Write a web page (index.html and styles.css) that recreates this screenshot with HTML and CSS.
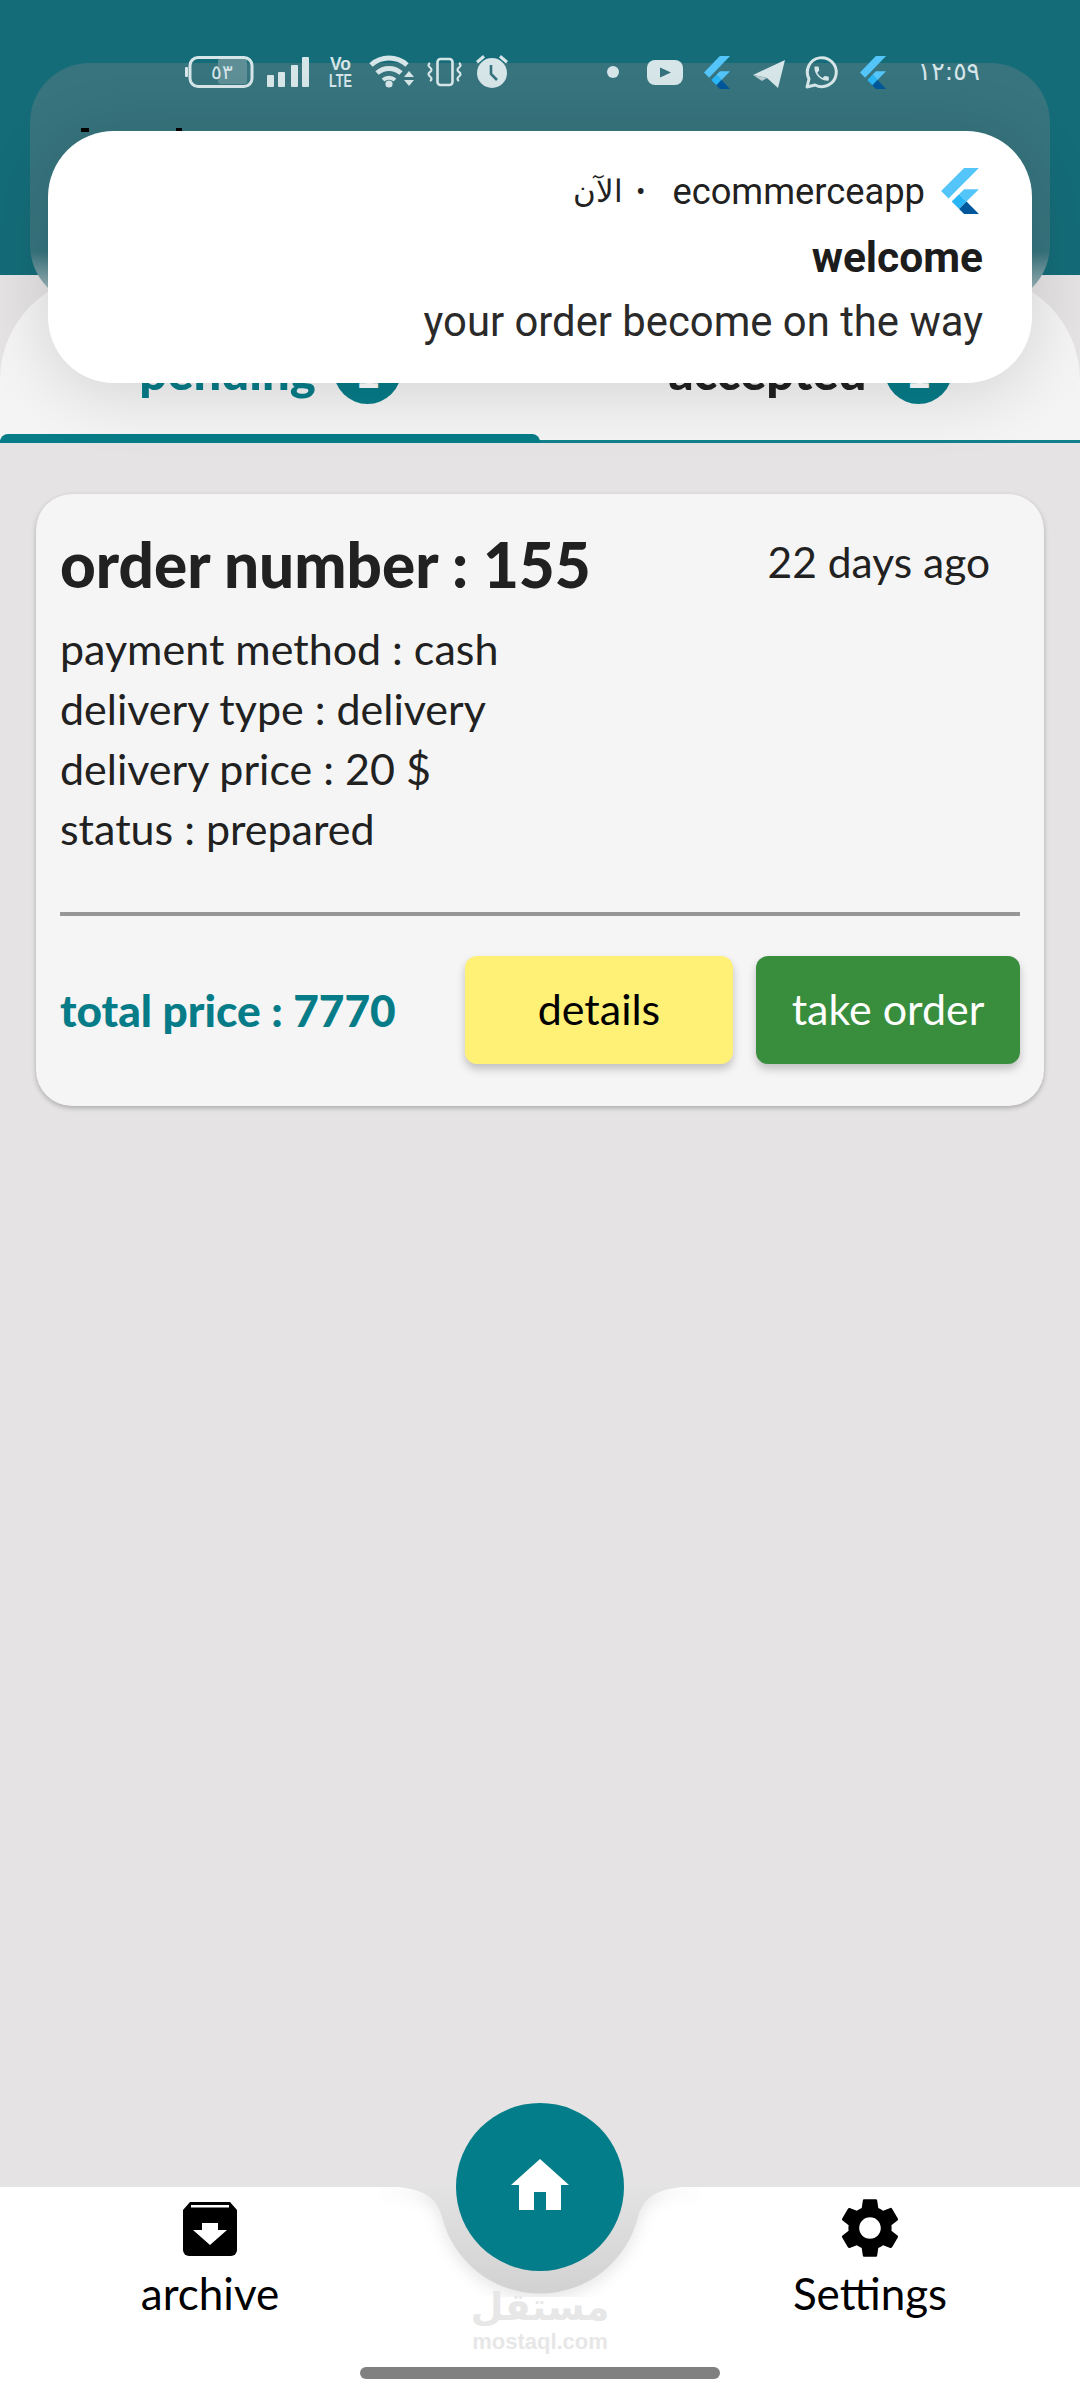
FILE: index.html
```html
<!DOCTYPE html>
<html lang="en">
<head>
<meta charset="utf-8">
<title>Orders</title>
<link rel="stylesheet" href="styles.css">
</head>
<body>
<div class="app">
  <header class="appbar"></header>

  <section class="tabs">
    <div class="tab-row">
      <div class="tab tab-active"><span class="tab-label">pending</span><span class="badge">1</span></div>
      <div class="tab"><span class="tab-label">accepted</span><span class="badge">1</span></div>
    </div>
    <div class="tab-line"><div class="tab-indicator"></div></div>
  </section>

  <main class="content">
    <article class="card">
      <div class="card-head">
        <h2 class="order-title">order number : 155</h2>
        <span class="order-age">22 days ago</span>
      </div>
      <ul class="order-meta">
        <li>payment method : cash</li>
        <li>delivery type : delivery</li>
        <li>delivery price : 20 $</li>
        <li>status : prepared</li>
      </ul>
      <hr class="divider">
      <div class="card-foot">
        <span class="total">total price : 7770</span>
        <div class="actions">
          <button class="btn btn-details">details</button>
          <button class="btn btn-take">take order</button>
        </div>
      </div>
    </article>
  </main>

  <nav class="nav">
    <svg class="notch" viewBox="0 0 320 110" width="320" height="110">
      <defs><linearGradient id="notchfill" x1="0" y1="0" x2="0" y2="1"><stop offset="0" stop-color="#e4e3e4"/><stop offset="1" stop-color="#d2d2d2"/></linearGradient></defs>
      <path class="notch-shape" fill="url(#notchfill)" d="M0 0H12C32 0 56 5 62 30A101 101 0 0 0 258 30C264 5 288 0 308 0H320V-2H0Z"/>
    </svg>
    <a class="nav-item">
      <svg class="nav-icon" viewBox="0 0 54 54" width="54" height="54">
        <path d="M7 0H47L54 8V48A6 6 0 0 1 48 54H6A6 6 0 0 1 0 48V8Z" fill="#000"/>
        <rect x="8" y="3" width="38" height="2.5" fill="#fff"/>
        <path d="M19 21H35V28H44L27 43L10 28H19Z" fill="#fff"/>
      </svg>
      <span class="nav-label">archive</span>
    </a>
    <a class="nav-item">
      <svg class="nav-icon nav-icon-gear" viewBox="0 0 24 24" width="72" height="72">
        <path d="M19.14 12.94c.04-.3.06-.61.06-.94 0-.32-.02-.64-.07-.94l2.03-1.58a.49.49 0 0 0 .12-.61l-1.92-3.32a.488.488 0 0 0-.59-.22l-2.39.96c-.5-.38-1.03-.7-1.62-.94l-.36-2.54a.484.484 0 0 0-.48-.41h-3.84c-.24 0-.43.17-.47.41l-.36 2.54c-.59.24-1.13.57-1.62.94l-2.39-.96c-.22-.08-.47 0-.59.22L2.74 8.87c-.12.21-.08.47.12.61l2.03 1.58c-.05.3-.09.63-.09.94s.02.64.07.94l-2.03 1.58a.49.49 0 0 0-.12.61l1.92 3.32c.12.22.37.29.59.22l2.39-.96c.5.38 1.03.7 1.62.94l.36 2.54c.05.24.24.41.48.41h3.84c.24 0 .44-.17.47-.41l.36-2.54c.59-.24 1.13-.56 1.62-.94l2.39.96c.22.08.47 0 .59-.22l1.92-3.32c.12-.22.07-.47-.12-.61l-2.01-1.58zM12 15.6c-1.98 0-3.6-1.62-3.6-3.6s1.62-3.6 3.6-3.6 3.6 1.62 3.6 3.6-1.62 3.6-3.6 3.6z" fill="#000"/>
      </svg>
      <span class="nav-label">Settings</span>
    </a>
    <button class="fab">
      <svg viewBox="0 0 58 51" width="58" height="51"><path d="M29 0L58 26H50V51H35V33H23V51H8V26H0Z" fill="#fff"/></svg>
    </button>
    <div class="watermark">
      <span class="wm-ar" lang="ar" dir="rtl">مستقل</span>
      <span class="wm-en">mostaql.com</span>
    </div>
    <div class="home-pill"></div>
  </nav>
</div>

<!-- system overlays -->
<div class="shade"><i class="peek peek-a"></i><i class="peek peek-b"></i></div>

<div class="statusbar">
  <svg viewBox="0 0 840 40" width="840" height="40">
    <g fill="#d5e5e8">
      <rect x="0" y="12" width="3" height="10" rx="1"/>
      <rect x="33" y="3" width="29" height="26" rx="3" fill="#5f8f96"/>
      <rect x="5" y="2.500" width="62" height="29" rx="8" fill="none" stroke="#d5e5e8" stroke-width="3"/>
      <text x="37" y="24" class="sb-batt" text-anchor="middle" direction="rtl">٥٣</text>
      <rect x="82" y="20" width="7" height="12" rx="1"/><rect x="93" y="17" width="7" height="15" rx="1"/><rect x="106" y="10" width="7" height="22" rx="1"/><rect x="117" y="2" width="7" height="30" rx="1"/>
      <text x="145" y="15" class="sb-vo" textLength="21" lengthAdjust="spacingAndGlyphs">Vo</text>
      <text x="144" y="32" class="sb-vo" textLength="23" lengthAdjust="spacingAndGlyphs">LTE</text>
      <path d="M186 10A27 27 0 0 1 222 10" fill="none" stroke="#d5e5e8" stroke-width="5"/>
      <path d="M192 18A18 18 0 0 1 216 18" fill="none" stroke="#d5e5e8" stroke-width="5"/>
      <path d="M198 25A9 9 0 0 1 210 25" fill="none" stroke="#d5e5e8" stroke-width="4"/>
      <circle cx="204" cy="29" r="3.600"/>
      <path d="M219 22h10l-5-6zM219 25h10l-5 6z"/>
      <rect x="252.500" y="4" width="15" height="26" rx="3" fill="none" stroke="#d5e5e8" stroke-width="2.600"/>
      <path d="M245 8q-3 2 0 4.500t0 4.500t0 4.500t0 4.500M274 8q3 2 0 4.500t0 4.500t0 4.500t0 4.500" fill="none" stroke="#d5e5e8" stroke-width="2.200"/>
      <circle cx="307" cy="18" r="15"/>
      <path d="M291 6l7-6 2 2.500-7 6zM323 6l-7-6-2 2.500 7 6z"/>
      <path d="M306 10v9l6 6" fill="none" stroke="#33727c" stroke-width="2.600"/>
      <circle cx="428" cy="17" r="6"/>
      <rect x="462" y="5" width="36" height="25" rx="8"/>
      <path d="M475 12.500l11 5-11 5z" fill="#33727c"/>
      <path d="M568 20L600 5L593 33L582 23Z"/>
      <path d="M568 20L582 23L577 26Z" fill="#b9cdd1"/>
      <g fill="none" stroke="#d5e5e8" stroke-width="3"><path d="M622 32l2-8A14.500 14.500 0 1 1 630 30Z" stroke-linejoin="round"/></g>
      <path transform="translate(627 9) scale(.8)" d="M6.620 10.790c1.440 2.830 3.760 5.140 6.590 6.590l2.200-2.200c.27-.27.67-.36 1.020-.24 1.120.37 2.330.57 3.570.57.55 0 1 .45 1 1V20c0 .55-.45 1-1 1-9.390 0-17-7.610-17-17 0-.55.45-1 1-1h3.500c.55 0 1 .45 1 1 0 1.250.2 2.450.57 3.570.11.35.03.74-.25 1.020l-2.200 2.200z"/>
      <text x="795" y="25" class="sb-time" direction="rtl" text-anchor="start">١٢:٥٩</text>
    </g>
    <g transform="translate(519 1) scale(.157 .163)">
      <polygon points="101,0 166,0 32.500,133.500 0,101" fill="#54c5f8"/>
      <polygon points="101,93 166,93 111.500,147.500 79,115" fill="#54c5f8"/>
      <polygon points="46.500,147.500 79,115 111.500,147.500 79,180" fill="#29b6f6"/>
      <polygon points="79,180 111.500,147.500 166,202 101,202" fill="#01579b"/>
    </g>
    <g transform="translate(675 1) scale(.157 .163)">
      <polygon points="101,0 166,0 32.500,133.500 0,101" fill="#54c5f8"/>
      <polygon points="101,93 166,93 111.500,147.500 79,115" fill="#54c5f8"/>
      <polygon points="46.500,147.500 79,115 111.500,147.500 79,180" fill="#29b6f6"/>
      <polygon points="79,180 111.500,147.500 166,202 101,202" fill="#01579b"/>
    </g>
  </svg>
</div>

<aside class="notice">
  <div class="notice-head">
    <svg class="notice-logo" viewBox="0 0 166 202" width="38" height="46">
      <polygon points="101,0 166,0 32.500,133.500 0,101" fill="#54c5f8"/>
      <polygon points="101,93 166,93 111.500,147.500 79,115" fill="#54c5f8"/>
      <polygon points="46.500,147.500 79,115 111.500,147.500 79,180" fill="#29b6f6"/>
      <polygon points="79,180 111.500,147.500 166,202 101,202" fill="#01579b"/>
    </svg>
    <span class="notice-app">ecommerceapp</span>
    <span class="notice-dot">•</span>
    <span class="notice-time" lang="ar">الآن</span>
  </div>
  <div class="notice-title">welcome</div>
  <div class="notice-body">your order become on the way</div>
</aside>
</body>
</html>
```
FILE: styles.css
```css
* { box-sizing: border-box; }
html, body { margin: 0; padding: 0; }
body { width: 1080px; height: 2400px; overflow: hidden; position: relative; background: #e5e3e4; font-family: "Lato", sans-serif; color: #212121; }
.app { display: flex; flex-direction: column; height: 2400px; }

.appbar { height: 275px; background: #146c78; flex: none; }

.tabs { flex: none; height: 168px; background: #f4f4f4; border-radius: 105px 105px 0 0; display: flex; flex-direction: column; justify-content: flex-end; }
.tab-row { display: grid; grid-template-columns: 1fr 1fr; padding-bottom: 36px; }
.tab { display: flex; justify-content: center; align-items: center; gap: 18px; color: #212121; }
.tab-active { color: #067c88; }
.tab-label { font-size: 49px; font-weight: 900; line-height: 65px; }
.badge { width: 67px; height: 66px; border-radius: 50%; background: #067c88; color: #fff; font-size: 46px; font-weight: 900; line-height: 65px; text-align: center; }
.tab-line { height: 3px; background: #12808c; position: relative; }
.tab-indicator { position: absolute; left: 0; bottom: 0; width: 540px; height: 9px; background: #067c88; border-radius: 8px 8px 0 0; }

.content { flex: 1; padding: 51px 36px 0; }
.card { height: 612px; background: #f5f5f5; border-radius: 36px; padding: 0 24px; box-shadow: 0 2px 5px rgba(0,0,0,.25); }
.card-head { display: flex; justify-content: space-between; padding: 32px 30px 0 0; height: 125px; }
.order-title { margin: 0; font-size: 62px; font-weight: 900; line-height: 76px; color: #212121; }
.order-age { font-size: 42.500px; line-height: 72px; color: #212121; }
.order-meta { list-style: none; margin: 0; padding: 0; font-size: 43px; line-height: 60px; color: #212121; }
.divider { margin: 53px 0 0; border: 0; height: 4px; background: #969696; }
.card-foot { display: flex; justify-content: space-between; align-items: center; margin-top: 40px; }
.total { font-size: 44.200px; font-weight: 900; color: #067c88; padding-bottom: 2px; }
.actions { display: flex; gap: 23px; }
.btn { border: 0; height: 108px; border-radius: 12px; font-family: "Lato", sans-serif; font-size: 43px; box-shadow: 0 5px 8px rgba(0,0,0,.22); padding: 0 0 3px; }
.btn-details { width: 268px; background: #fff176; color: #000; }
.btn-take { width: 264px; background: #388e3c; color: #fff; }

.nav { flex: none; height: 213px; background: #fff; position: relative; display: flex; justify-content: space-between; padding: 0 60px; }
.notch { position: absolute; left: 380px; top: 0; }
.notch-shape { filter: drop-shadow(0 5px 8px rgba(0,0,0,.1)); }
.nav-item { width: 300px; height: 140px; display: flex; flex-direction: column; align-items: center; position: relative; color: #000; }
.nav-icon { position: absolute; top: 15px; }
.nav-icon-gear { top: 5px; }
.nav-label { position: absolute; top: 79px; font-size: 44px; line-height: 54px; color: #000; }
.fab { position: absolute; left: 456px; top: -84px; width: 168px; height: 168px; border: 0; border-radius: 50%; background: #047d8a; padding: 0; display: flex; align-items: flex-start; justify-content: center; }
.fab svg { margin-top: 56px; }
.watermark { position: absolute; left: 475px; top: 97px; width: 130px; display: flex; flex-direction: column; align-items: center; color: #e7e7e7; }
.wm-ar { font-family: "DejaVu Sans", sans-serif; font-weight: 700; font-size: 38px; line-height: 46px; }
.wm-en { font-family: "Liberation Sans", sans-serif; font-size: 22px; font-weight: 700; line-height: 24px; }
.home-pill { position: absolute; left: 360px; top: 180px; width: 360px; height: 12px; border-radius: 6px; background: #808080; }

.shade { position: absolute; left: 30px; top: 63px; width: 1020px; height: 242px; border-radius: 60px; background: linear-gradient(#37747e 0, #37747e 78%, #c9d2d5 100%); }
.peek { position: absolute; top: 65px; width: 8px; height: 4px; background: #000; }
.peek-a { left: 51px; }
.peek-b { left: 146px; width: 6px; }

.statusbar { position: absolute; left: 185px; top: 55px; width: 840px; height: 40px; }
.statusbar svg { display: block; overflow: visible; }
.sb-batt { font-family: "DejaVu Sans", sans-serif; font-size: 20px; font-weight: 200; }
.sb-vo { font-family: "Liberation Sans", sans-serif; font-size: 18px; font-weight: 700; }
.sb-time { font-family: "DejaVu Sans", sans-serif; font-size: 25px; }

.notice { position: absolute; left: 48px; top: 131px; width: 984px; height: 252px; background: #fff; border-radius: 66px; box-shadow: 0 8px 70px rgba(0,0,0,.14); padding: 0 49px 0 0; display: flex; flex-direction: column; align-items: flex-end; }
.notice-head { display: flex; flex-direction: row-reverse; align-items: center; margin-top: 37px; height: 46px; font-family: "Roboto", sans-serif; color: #212121; }
.notice-logo { margin-right: 4px; margin-left: 16px; }
.notice-app { font-size: 36.300px; }
.notice-dot { font-size: 28px; margin-left: 13px; margin-right: 27px; }
.notice-time { font-family: "DejaVu Sans", sans-serif; font-size: 31px; font-weight: 300; }
.notice-title { font-family: "Roboto", sans-serif; font-size: 42.500px; font-weight: 700; line-height: 50px; margin-top: 19px; color: #1c1c1c; }
.notice-body { font-family: "Roboto", sans-serif; font-size: 41.800px; line-height: 50px; margin-top: 14px; color: #2a2a2a; }
```
